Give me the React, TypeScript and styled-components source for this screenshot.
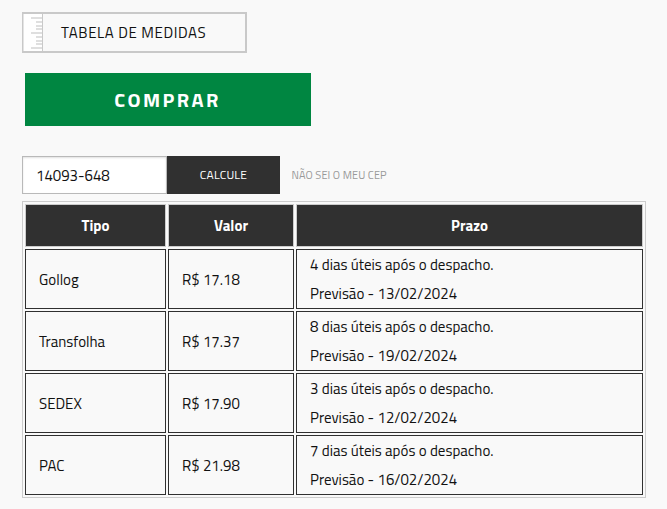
import React from "react";
import styled, { createGlobalStyle } from "styled-components";

const GlobalStyle = createGlobalStyle`
  * { box-sizing: border-box; }
  body {
    margin: 0;
    background: #f9f9f9;
    color: #111;
    font-family: "Titillium Web", Roboto, "Open Sans", sans-serif;
    font-size: 15px;
  }
`;

const Page = styled.main`
  width: 667px;
  height: 509px;
  padding: 12px 21px 0 22px;
  overflow: hidden;
`;

const SizeButton = styled.button`
  display: flex;
  align-items: center;
  width: 225px;
  height: 41px;
  padding: 0;
  border: 2px solid #c9c9c9;
  border-left-width: 1px;
  background: transparent;
  color: #111;
  font: inherit;
`;

const Ruler = styled.svg`
  display: block;
  width: 20px;
  height: 37px;
`;

const SizeLabel = styled.span`
  margin-left: 18px;
  font-size: 15px;
  line-height: 20px;
  letter-spacing: 0.6px;
  white-space: nowrap;
`;

const BuyButton = styled.button`
  display: block;
  width: 286px;
  height: 53px;
  margin: 20px 0 0 3px;
  padding: 0 1px 0 0;
  border: 0;
  background: #008641;
  color: #fff;
  font: 700 20px/24px "Titillium Web", Roboto, sans-serif;
  letter-spacing: 2.45px;
`;

const Shipping = styled.form`
  display: flex;
  align-items: center;
  height: 38px;
  margin: 30px 0 7px;
`;

const ZipInput = styled.input`
  width: 145px;
  height: 38px;
  padding: 0 13px;
  border: 1px solid #b9b9b9;
  border-radius: 0;
  outline: 0;
  background: #fff;
  box-shadow: inset 0 1px 2px rgba(0, 0, 0, 0.12);
  color: #111;
  font: inherit;
`;

const CalcButton = styled.button`
  width: 113px;
  height: 38px;
  padding: 0;
  border: 0;
  background: #303030;
  color: #fff;
  font: 400 12px/16px "Titillium Web", Roboto, sans-serif;
  letter-spacing: 0.2px;
`;

const ZipLink = styled.a`
  margin-left: 11.5px;
  color: #999;
  font-size: 11px;
  line-height: 16px;
  letter-spacing: 0.08px;
`;

const Table = styled.table`
  width: 624px;
  table-layout: fixed;
  border: 1px solid #ccc;
  border-collapse: separate;
  border-spacing: 2px;
`;

const TypeColumn = styled.col`
  width: 141px;
`;

const PriceColumn = styled.col`
  width: 126px;
`;

const Head = styled.th`
  height: 43px;
  padding: 0;
  border: 1px solid #ccc;
  background: #303030;
  color: #fff;
  font-weight: 700;
  line-height: 20px;
`;

const Cell = styled.td`
  height: 60px;
  padding: 0 13px;
  border: 1px solid #303030;
  line-height: 29px;
  vertical-align: middle;
  white-space: nowrap;
`;

const Line = styled.span`
  display: block;
`;

const rows = [
  { type: "Gollog", price: "R$ 17.18", days: 4, date: "13/02/2024" },
  { type: "Transfolha", price: "R$ 17.37", days: 8, date: "19/02/2024" },
  { type: "SEDEX", price: "R$ 17.90", days: 3, date: "12/02/2024" },
  { type: "PAC", price: "R$ 21.98", days: 7, date: "16/02/2024" },
];

const ticks = [3, 7, 11, 14, 18, 22, 26, 29, 33];

export default function App() {
  return (
    <>
      <GlobalStyle />
      <Page>
        <SizeButton type="button">
          <Ruler viewBox="0 0 20 37" shapeRendering="crispEdges">
            <rect width="20" height="37" fill="#fff" />
            <rect width="1" height="37" fill="#e4e4e4" />
            {ticks.map((y, i) => {
              const x = i % 4 === 0 ? 8 : 13;
              return <rect key={y} x={x} y={y} width={19 - x} height="2" fill="#dfdfdf" />;
            })}
            <rect x="19" width="1" height="37" fill="#c9c9c9" />
          </Ruler>
          <SizeLabel>TABELA DE MEDIDAS</SizeLabel>
        </SizeButton>
        <BuyButton type="button">COMPRAR</BuyButton>
        <Shipping>
          <ZipInput defaultValue="14093-648" aria-label="CEP" />
          <CalcButton type="button">CALCULE</CalcButton>
          <ZipLink>NÃO SEI O MEU CEP</ZipLink>
        </Shipping>
        <Table>
          <colgroup>
            <TypeColumn />
            <PriceColumn />
            <col />
          </colgroup>
          <thead>
            <tr>
              <Head>Tipo</Head>
              <Head>Valor</Head>
              <Head>Prazo</Head>
            </tr>
          </thead>
          <tbody>
            {rows.map((r) => (
              <tr key={r.type}>
                <Cell>{r.type}</Cell>
                <Cell>{r.price}</Cell>
                <Cell>
                  <Line>{r.days} dias úteis após o despacho.</Line>
                  <Line>Previsão - {r.date}</Line>
                </Cell>
              </tr>
            ))}
          </tbody>
        </Table>
      </Page>
    </>
  );
}
